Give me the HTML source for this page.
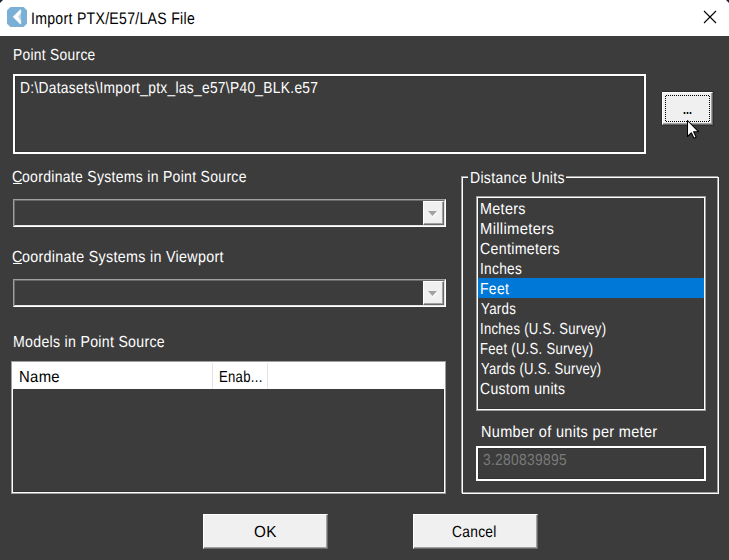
<!DOCTYPE html>
<html><head><meta charset="utf-8">
<style>
html,body{margin:0;padding:0;}
body{width:729px;height:560px;background:#3c3c3c;position:relative;overflow:hidden;font-family:"Liberation Sans",sans-serif;}
.a{position:absolute;box-sizing:border-box;}
.t{position:absolute;font-size:16px;line-height:16px;text-rendering:geometricPrecision;white-space:pre;color:#fff;transform-origin:0 0;}
.k{color:#000;}
.tb{position:absolute;left:0;top:0;width:729px;height:36px;background:#fff;}
.btn{position:absolute;box-sizing:border-box;background:#f0f0f0;border-top:1px solid #fff;border-left:1px solid #fff;border-right:1px solid #696969;border-bottom:1px solid #696969;}
.btn .in{position:absolute;left:0;top:0;right:0;bottom:0;border-right:1px solid #a0a0a0;border-bottom:1px solid #a0a0a0;}
.edit{position:absolute;box-sizing:border-box;border:2px solid #fff;box-shadow:inset 1px 1px 0 #333,inset -1px -1px 0 #333;}
.lb{position:absolute;box-sizing:border-box;border:1px solid #a0a0a0;}
.lb .in{position:absolute;left:0;top:0;right:0;bottom:0;border:1px solid #fff;box-shadow:inset -1px -1px 0 #333;}
.combo{position:absolute;box-sizing:border-box;border-top:1px solid #a0a0a0;border-left:1px solid #a0a0a0;border-right:1px solid #fff;border-bottom:1px solid #fff;}
.combo .in{position:absolute;left:0;top:0;right:0;bottom:0;border-top:1px solid #696969;border-left:1px solid #696969;border-right:1px solid #e3e3e3;border-bottom:1px solid #e3e3e3;}
</style></head><body>
<!-- title bar -->
<div class="tb"></div>
<div class="a" style="left:0;top:0;width:2px;height:1px;background:#1e2533"></div><div class="a" style="left:0;top:1px;width:1px;height:1px;background:#1e2533"></div>
<div class="a" style="left:2px;top:0;width:1px;height:1px;background:#8a8e96"></div><div class="a" style="left:0;top:2px;width:1px;height:1px;background:#8a8e96"></div><div class="a" style="left:1px;top:1px;width:1px;height:1px;background:#8a8e96"></div>
<div class="a" style="left:727px;top:0;width:2px;height:1px;background:#1e2533"></div><div class="a" style="left:728px;top:1px;width:1px;height:1px;background:#1e2533"></div>
<div class="a" style="left:726px;top:0;width:1px;height:1px;background:#8a8e96"></div><div class="a" style="left:728px;top:2px;width:1px;height:1px;background:#8a8e96"></div><div class="a" style="left:727px;top:1px;width:1px;height:1px;background:#8a8e96"></div>
<svg class="a" style="left:7px;top:7px" width="20" height="20" viewBox="0 0 20 20">

<polygon points="3.6,0 16.4,0 20,3.6 20,16.4 16.4,20 3.6,20 0,16.4 0,3.6" fill="#7aafd6" stroke="#8cb0cc" stroke-width="0.4"/>
<g>
<polygon points="10.8,9.8 13.8,6.2 13.8,13.4" fill="#c2daee"/>
<polygon points="13.3,2.7 6.1,9.8 13.3,17.1 13.8,16.6 13.8,13.6 10.8,9.8 13.8,6 13.8,3.2" fill="#fff" stroke="#fff" stroke-width="0.6" stroke-linejoin="round"/>
</g>
</svg>
<div class="t k" style="left:31px;top:10.5px;font-size:16.6px;letter-spacing:0.35px;transform:scaleX(0.8482)">Import PTX/E57/LAS File</div>
<svg class="a" style="left:700px;top:7px" width="20" height="20" viewBox="0 0 20 20">
<path d="M4,4 L16,16 M16,4 L4,16" stroke="#000" stroke-width="1.1" fill="none"/>
</svg>

<!-- point source -->
<div class="t" style="left:13px;top:48px;letter-spacing:0.35px;transform:scaleX(0.8617)">Point Source</div>
<div class="edit" style="left:13px;top:74px;width:633px;height:80px;"></div>
<div class="t" style="left:20px;top:81px;letter-spacing:0.35px;transform:scaleX(0.8609)">D:\Datasets\Import_ptx_las_e57\P40_BLK.e57</div>

<div class="a" style="left:661px;top:91px;width:53px;height:35px;border:1px solid #2f2f2f;"></div>
<div class="a" style="left:661px;top:91px;width:1px;height:1px;background:#555"></div>
<div class="btn" style="left:662px;top:92px;width:51px;height:33px;"><div class="in"></div></div>
<svg class="a" style="left:660px;top:90px" width="60" height="40"><path d="M6 5h1v1h-1zM6 31h1v1h-1zM8 5h1v1h-1zM8 31h1v1h-1zM10 5h1v1h-1zM10 31h1v1h-1zM12 5h1v1h-1zM12 31h1v1h-1zM14 5h1v1h-1zM14 31h1v1h-1zM16 5h1v1h-1zM16 31h1v1h-1zM18 5h1v1h-1zM18 31h1v1h-1zM20 5h1v1h-1zM20 31h1v1h-1zM22 5h1v1h-1zM22 31h1v1h-1zM24 5h1v1h-1zM24 31h1v1h-1zM26 5h1v1h-1zM26 31h1v1h-1zM28 5h1v1h-1zM28 31h1v1h-1zM30 5h1v1h-1zM30 31h1v1h-1zM32 5h1v1h-1zM32 31h1v1h-1zM34 5h1v1h-1zM34 31h1v1h-1zM36 5h1v1h-1zM36 31h1v1h-1zM38 5h1v1h-1zM38 31h1v1h-1zM40 5h1v1h-1zM40 31h1v1h-1zM42 5h1v1h-1zM42 31h1v1h-1zM44 5h1v1h-1zM44 31h1v1h-1zM46 5h1v1h-1zM46 31h1v1h-1zM48 5h1v1h-1zM48 31h1v1h-1zM5 6h1v1h-1zM49 6h1v1h-1zM5 8h1v1h-1zM49 8h1v1h-1zM5 10h1v1h-1zM49 10h1v1h-1zM5 12h1v1h-1zM49 12h1v1h-1zM5 14h1v1h-1zM49 14h1v1h-1zM5 16h1v1h-1zM49 16h1v1h-1zM5 18h1v1h-1zM49 18h1v1h-1zM5 20h1v1h-1zM49 20h1v1h-1zM5 22h1v1h-1zM49 22h1v1h-1zM5 24h1v1h-1zM49 24h1v1h-1zM5 26h1v1h-1zM49 26h1v1h-1zM5 28h1v1h-1zM49 28h1v1h-1zM5 30h1v1h-1zM49 30h1v1h-1z" fill="#000"/></svg>
<div class="a" style="left:683px;top:112px;width:1px;height:2px;background:#c8a070"></div>
<div class="a" style="left:684px;top:112px;width:1px;height:2px;background:#000"></div>
<div class="a" style="left:685px;top:112px;width:1px;height:2px;background:#70b0e0"></div>
<div class="a" style="left:686px;top:112px;width:1px;height:2px;background:#c8a070"></div>
<div class="a" style="left:687px;top:112px;width:1px;height:2px;background:#000"></div>
<div class="a" style="left:688px;top:112px;width:1px;height:2px;background:#70b0e0"></div>
<div class="a" style="left:689px;top:112px;width:1px;height:2px;background:#c8a070"></div>
<div class="a" style="left:690px;top:112px;width:1px;height:2px;background:#000"></div>
<div class="a" style="left:691px;top:112px;width:1px;height:2px;background:#70b0e0"></div>

<!-- coordinate systems -->
<div class="t" style="left:12px;top:170px;letter-spacing:0.35px;transform:scaleX(0.9000)">C</div><div class="a" style="left:13px;top:183px;width:9px;height:1px;background:#fff"></div><div class="t" style="left:22px;top:170px;letter-spacing:0.35px;transform:scaleX(0.8745)">oordinate Systems in Point Source</div>
<div class="combo" style="left:13px;top:199px;width:433px;height:28px;"><div class="in"></div></div>
<div class="btn" style="left:423px;top:201px;width:21px;height:24px;"><div class="in"></div></div>
<svg class="a" style="left:427px;top:210px" width="12" height="8" viewBox="0 0 12 8"><polygon points="1.5,2 10.5,2 6,7" fill="#fff"/><polygon points="1,1 10,1 5.5,6" fill="#a0a0a0"/></svg>

<div class="t" style="left:12px;top:250px;letter-spacing:0.35px;transform:scaleX(0.9000)">C</div><div class="a" style="left:13px;top:263px;width:9px;height:1px;background:#fff"></div><div class="t" style="left:22px;top:250px;letter-spacing:0.35px;transform:scaleX(0.8934)">oordinate Systems in Viewport</div>
<div class="combo" style="left:13px;top:279px;width:433px;height:28px;"><div class="in"></div></div>
<div class="btn" style="left:423px;top:281px;width:21px;height:24px;"><div class="in"></div></div>
<svg class="a" style="left:427px;top:290px" width="12" height="8" viewBox="0 0 12 8"><polygon points="1.5,2 10.5,2 6,7" fill="#fff"/><polygon points="1,1 10,1 5.5,6" fill="#a0a0a0"/></svg>

<!-- models -->
<div class="t" style="left:13px;top:335px;letter-spacing:0.35px;transform:scaleX(0.8824)">Models in Point Source</div>
<div class="lb" style="left:11px;top:361px;width:435px;height:133px;"><div class="in"></div></div>
<div class="a" style="left:13px;top:363px;width:431px;height:26px;background:#fff"></div>
<div class="a" style="left:212px;top:363px;width:1px;height:26px;background:#e5e5e5"></div>
<div class="a" style="left:267px;top:363px;width:1px;height:26px;background:#e5e5e5"></div>
<div class="t k" style="left:19px;top:370px;letter-spacing:0.35px;transform:scaleX(0.9286)">Name</div>
<div class="t k" style="left:219px;top:370px;letter-spacing:0.35px;transform:scaleX(0.8200)">Enab...</div>

<!-- distance units group -->
<div class="a" style="left:461px;top:176px;width:257px;height:317px;border:1px solid #a0a0a0;"></div>
<div class="a" style="left:462px;top:177px;width:257px;height:317px;border:1px solid #fff;"></div>
<div class="a" style="left:468px;top:168px;width:98px;height:16px;background:#3c3c3c"></div>
<div class="t" style="left:470px;top:171px;letter-spacing:0.35px;transform:scaleX(0.8774)">Distance Units</div>

<div class="lb" style="left:476px;top:196px;width:230px;height:215px;"><div class="in"></div></div>
<div class="a" style="left:478px;top:278px;width:226px;height:20px;background:#0078d7"></div>
<div class="t" style="left:480px;top:202px;letter-spacing:0.35px;transform:scaleX(0.8980)">Meters</div>
<div class="t" style="left:480px;top:222px;letter-spacing:0.35px;transform:scaleX(0.9241)">Millimeters</div>
<div class="t" style="left:480px;top:242px;letter-spacing:0.35px;transform:scaleX(0.8864)">Centimeters</div>
<div class="t" style="left:480px;top:262px;letter-spacing:0.35px;transform:scaleX(0.8552)">Inches</div>
<div class="t" style="left:480px;top:282px;letter-spacing:0.35px;transform:scaleX(0.8750)">Feet</div>
<div class="t" style="left:481px;top:302px;letter-spacing:0.35px;transform:scaleX(0.8299)">Yards</div>
<div class="t" style="left:480px;top:322px;letter-spacing:0.35px;transform:scaleX(0.8170)">Inches (U.S. Survey)</div>
<div class="t" style="left:480px;top:342px;letter-spacing:0.35px;transform:scaleX(0.8175)">Feet (U.S. Survey)</div>
<div class="t" style="left:481px;top:362px;letter-spacing:0.35px;transform:scaleX(0.8151)">Yards (U.S. Survey)</div>
<div class="t" style="left:480px;top:382px;letter-spacing:0.35px;transform:scaleX(0.8750)">Custom units</div>

<div class="t" style="left:481px;top:425px;letter-spacing:0.35px;transform:scaleX(0.9067)">Number of units per meter</div>
<div class="edit" style="left:476px;top:446px;width:230px;height:35px;"></div>
<div class="t" style="left:483px;top:453px;color:#7a7a7a;letter-spacing:0.35px;transform:scaleX(0.8632)">3.280839895</div>

<!-- buttons -->
<div class="btn" style="left:203px;top:514px;width:125px;height:35px;"><div class="in"></div></div>
<div class="t k" style="left:254px;top:525px;letter-spacing:0.35px;transform:scaleX(0.9545)">OK</div>
<div class="btn" style="left:413px;top:514px;width:125px;height:35px;"><div class="in"></div></div>
<div class="t k" style="left:452px;top:525px;letter-spacing:0.35px;transform:scaleX(0.8600)">Cancel</div>

<!-- cursor -->
<svg class="a" style="left:686px;top:119px" width="14" height="22" viewBox="0 0 14 22">
<path d="M1.5,1.5 L1.5,17.5 L5.3,13.8 L8,19.3 L10.2,18.3 L7.6,12.8 L12.7,12.8 Z" fill="#fff" stroke="#000" stroke-width="1.05" stroke-linejoin="round"/>
</svg>
</body></html>
